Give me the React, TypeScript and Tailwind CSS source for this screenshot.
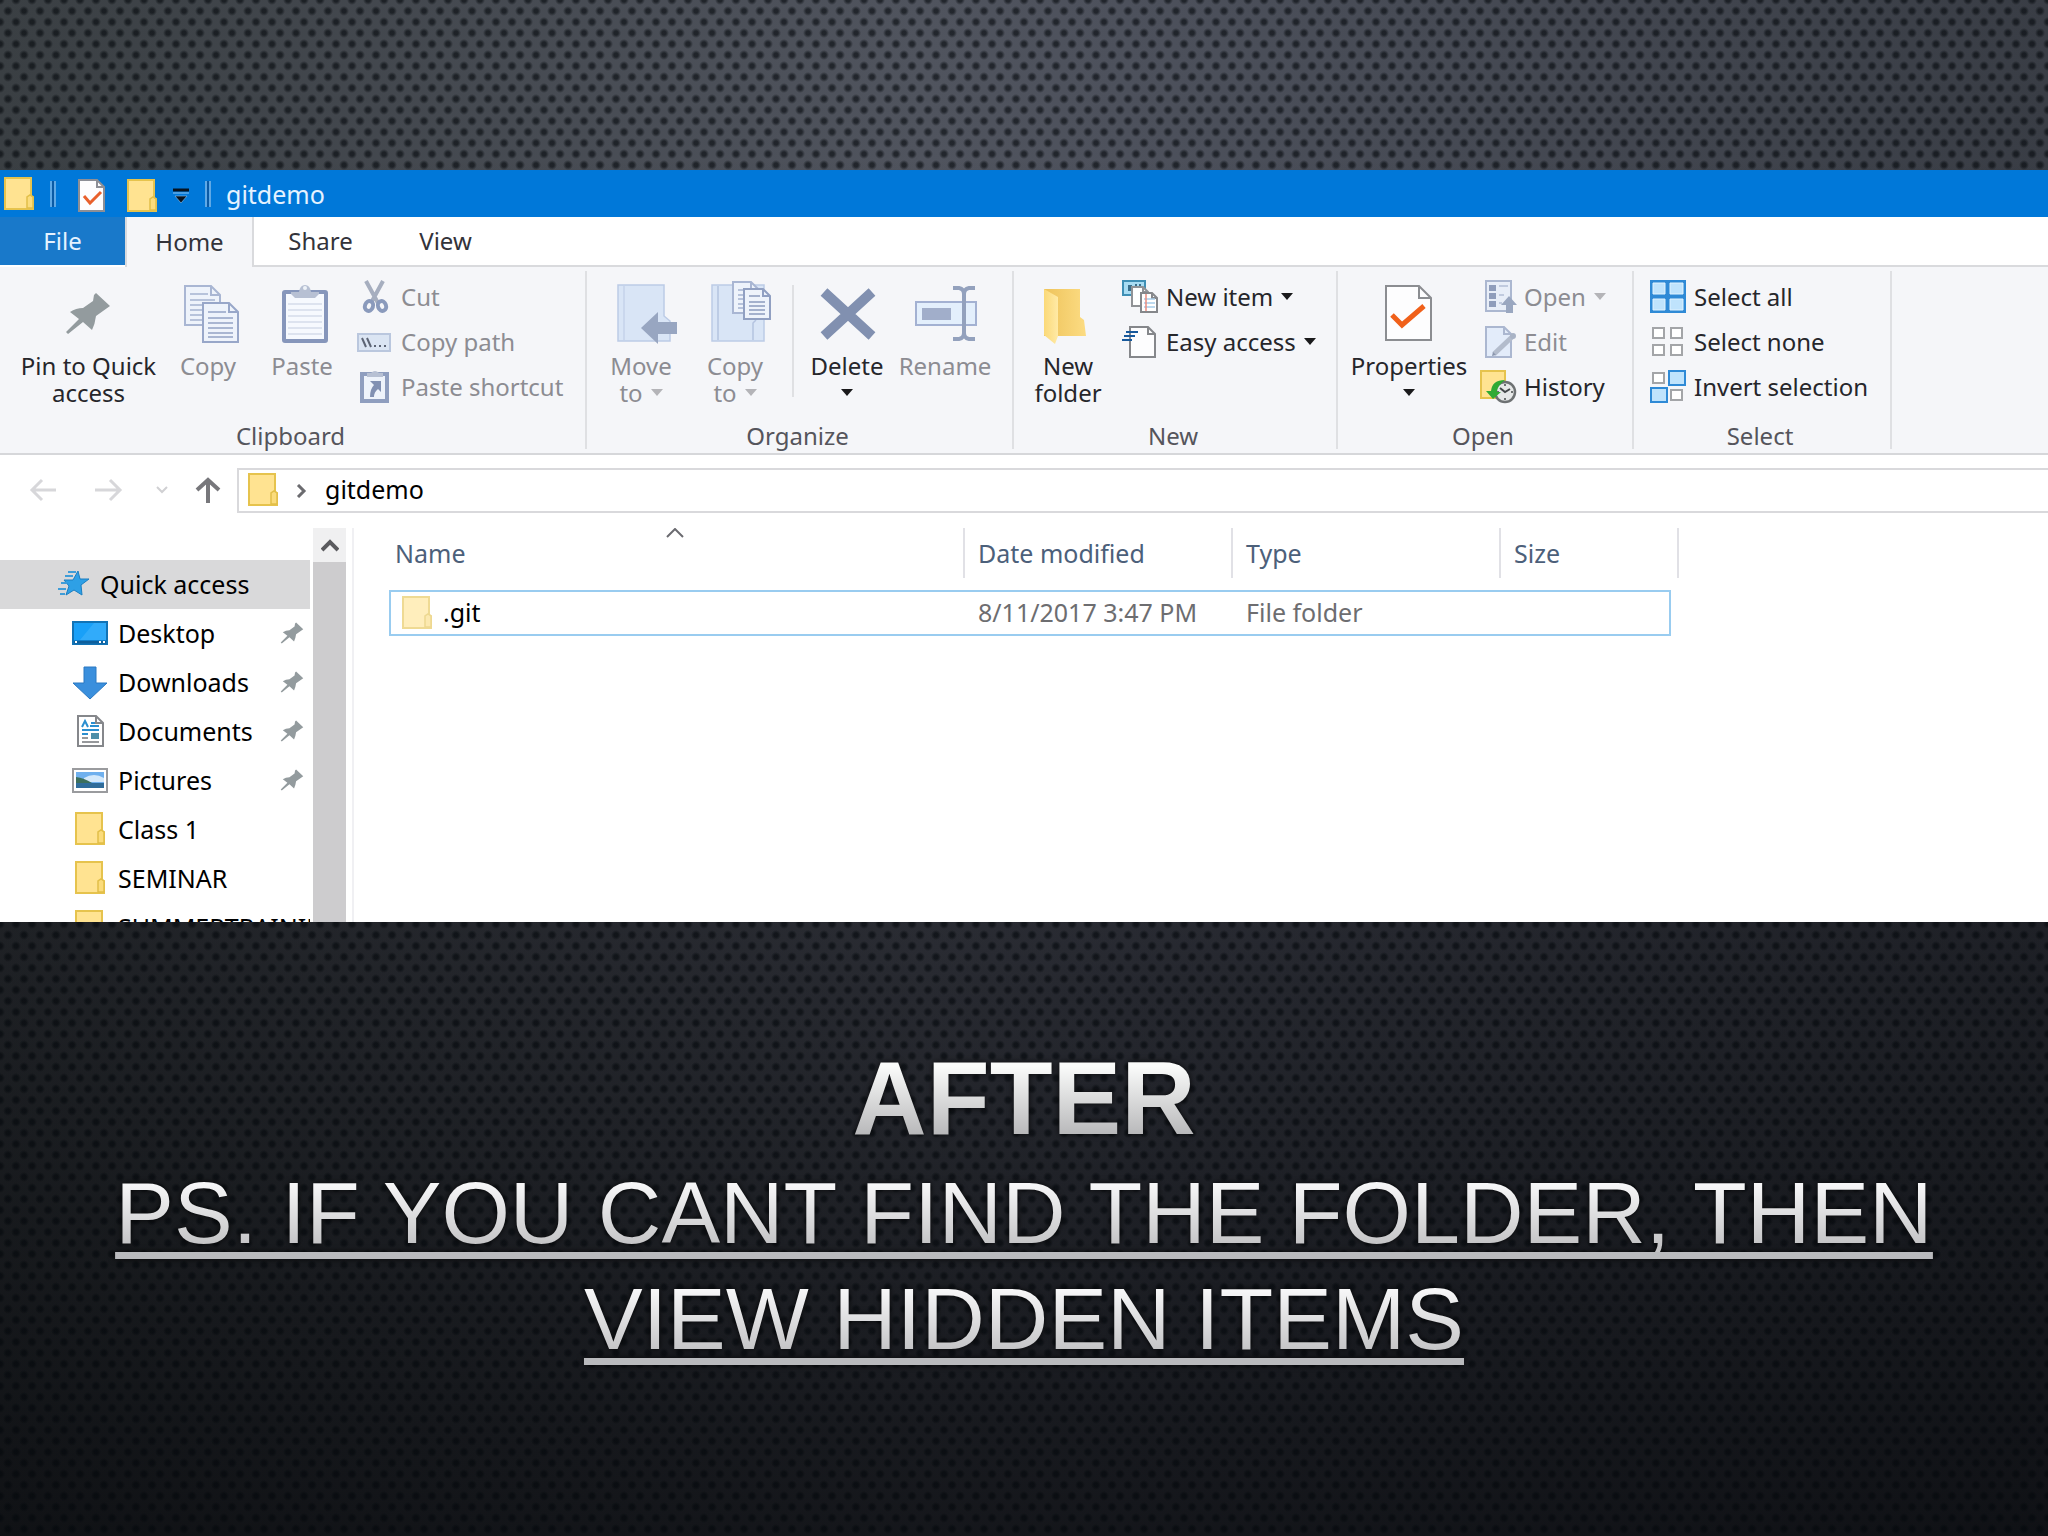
import type { ReactNode } from 'react'
import clsx from 'clsx'

/* ---------- icons ---------- */

function FolderIcon({ faded = false }: { faded?: boolean }) {
  return (
    <svg width="30" height="33" viewBox="0 0 30 33" className={clsx('shrink-0', faded && 'opacity-60')}>
      <path d="M1 1h26v18l2 1v12H1z" fill="#ffe391" stroke="#e6c34d" strokeWidth="2" />
      <path d="M23 31V20l3-2 3 2v11z" fill="#fbdc7c" stroke="#e2bf48" strokeWidth="1.5" />
    </svg>
  )
}

function PinShape() {
  return (
    <path
      d="M39 9 53 22l-7 5-7 5q-1 8-4 14l-9-8-15 12-2-2 13-13-9-7q6-4 13-4l10-7 1-6z"
      fill="#939b9e"
    />
  )
}

function SmallPin() {
  return (
    <svg width="24" height="22" viewBox="8 8 46 43" className="shrink-0">
      <PinShape />
    </svg>
  )
}

interface PageProps {
  x: number
  y: number
  w: number
  h: number
  fold?: number
  fill?: string
  stroke?: string
  rows?: number[]
}

function Page({ x, y, w, h, fold = 9, fill = '#eef3fb', stroke = '#a9b6d3', rows = [] }: PageProps) {
  return (
    <g fill="none" stroke={stroke} strokeWidth="2">
      <path d={`M${x} ${y}h${w - fold}l${fold} ${fold}v${h - fold}h${-w}z`} fill={fill} />
      <path d={`M${x + w - fold} ${y}v${fold}h${fold}`} />
      {rows.map((r) => (
        <path key={r} d={`M${x + 5} ${y + r}h${r < fold + 2 ? w - fold - 8 : w - 10}`} strokeWidth="1.6" />
      ))}
    </g>
  )
}

function BigIcon({ children }: { children: ReactNode }) {
  return (
    <svg width="64" height="60" viewBox="0 0 64 60" className="overflow-visible">
      {children}
    </svg>
  )
}

function SmallIcon({ children }: { children: ReactNode }) {
  return (
    <svg width="36" height="32" viewBox="0 0 36 32" className="shrink-0 overflow-visible">
      {children}
    </svg>
  )
}

const pinIcon = <BigIcon><PinShape /></BigIcon>

const copyIcon = (
  <BigIcon>
    <Page x={9} y={2} w={35} h={39} rows={[8, 14, 19, 24, 29, 34]} />
    <Page x={27} y={19} w={35} h={39} stroke="#98a7c9" rows={[9, 15, 20, 25, 30, 34]} />
  </BigIcon>
)

const pasteIcon = (
  <BigIcon>
    <rect x="14" y="8" width="42" height="49" rx="1" fill="#f6f9fe" stroke="#8696bb" strokeWidth="4" />
    <path d="M18 20h34M18 26h34M18 32h34M18 38h34M18 44h34M18 50h34" stroke="#d5dcea" strokeWidth="1.5" />
    <path d="M21 8h8q1-7 6-7t6 7h8v2l-4 4H25l-4-4z" fill="#b7c0d3" />
    <circle cx="35" cy="4" r="2" fill="#eef2f8" />
  </BigIcon>
)

const moveIcon = (
  <BigIcon>
    <path d="M9 1h46v31l6 5v20H9z" fill="#d9e5f6" stroke="#bccbe6" strokeWidth="1.5" />
    <path d="M15 2v54" stroke="#c4d2ea" strokeWidth="1.5" />
    <path d="M32 44 49 28v10h19v12H49v10z" fill="#98a6c1" />
  </BigIcon>
)

const copyToIcon = (
  <BigIcon>
    <path d="M9 1h52v56H9z" fill="#d9e5f6" stroke="#bccbe6" strokeWidth="1.5" />
    <path d="M15 2v54M50 56V39l3-3" fill="none" stroke="#b4c3e0" strokeWidth="1.5" />
    <Page x={30} y={-2} w={25} h={31} fold={7} rows={[8, 13, 17, 22, 26]} />
    <Page x={41} y={5} w={26} h={30} fold={7} stroke="#91a0c2" rows={[7, 13, 17, 21, 25]} />
  </BigIcon>
)

const deleteIcon = (
  <BigIcon>
    <path d="m9 8 48 44M57 8 9 52" stroke="#8190b0" strokeWidth="10" />
  </BigIcon>
)

const renameIcon = (
  <BigIcon>
    <path d="M3 18h60v23H3z" fill="#e3effc" stroke="#a3b1d2" strokeWidth="2" />
    <path d="M9 24h29v12H9z" fill="#a1aeca" />
    <path d="M40 4h6q5 1 5 6v39q0 5-5 6h-6M62 4h-6q-5 1-5 6v39q0 5 5 6h6" fill="none" stroke="#93a1bd" strokeWidth="4" />
  </BigIcon>
)

const newFolderIcon = (
  <BigIcon>
    <defs>
      <linearGradient id="folderBack">
        <stop offset="0" stopColor="#eec35b" />
        <stop offset="1" stopColor="#fcdc83" />
      </linearGradient>
      <linearGradient id="folderFlap">
        <stop offset="0" stopColor="#fbd978" />
        <stop offset="1" stopColor="#ffeaa6" />
      </linearGradient>
    </defs>
    <path d="M8 5h36v28l4 3 2 16H8z" fill="url(#folderBack)" />
    <path d="m8 5 14 8v39l-3 8L8 51z" fill="url(#folderFlap)" />
  </BigIcon>
)

const propertiesIcon = (
  <BigIcon>
    <Page x={9} y={2} w={45} h={54} fold={12} fill="#fdfdfe" stroke="#8b8d91" />
    <path d="m15 31 10 10 22-19" fill="none" stroke="#f0601a" strokeWidth="5" />
  </BigIcon>
)

const cutIcon = (
  <SmallIcon>
    <path d="m9 0 12 22M26 0 14 22" stroke="#a6aebf" strokeWidth="4" />
    <g fill="none" stroke="#8a9abc" strokeWidth="4">
      <ellipse cx="12" cy="25" rx="4" ry="5" transform="rotate(20 12 25)" />
      <ellipse cx="25" cy="25" rx="4" ry="5" transform="rotate(-20 25 25)" />
    </g>
  </SmallIcon>
)

const copyPathIcon = (
  <SmallIcon>
    <path d="M1 8h32v17H1z" fill="#dbe5f3" stroke="#bac7de" strokeWidth="2" />
    <path d="m5 12 4 9M10 12l4 9" stroke="#5d6575" strokeWidth="2" />
    <path d="M17 19h2v2h-2zM22 19h2v2h-2zM27 19h2v2h-2z" fill="#5d6575" />
  </SmallIcon>
)

const pasteShortcutIcon = (
  <SmallIcon>
    <path d="M5 3h25v27H5z" fill="#eef3fb" stroke="#8f9ebf" strokeWidth="4" />
    <path d="M10 2h4q4-4 8 0h4v4H10z" fill="#b7c0d3" />
    <path d="M13 10h11v11l-3-3q-4 3-4 8h-4q0-8 4-12z" fill="#8190b2" />
  </SmallIcon>
)

const newItemIcon = (
  <SmallIcon>
    <path d="M1 0h22v14H1z" fill="#a8dcf3" stroke="#3f8fb5" strokeWidth="2" />
    <path d="M6 4h4v6H6zM13 3h2v3h-2zM17 3h2v3h-2z" fill="#3a6f8c" />
    <Page x={10} y={6} w={16} h={19} fold={5} fill="#fff" stroke="#909296" />
    <Page x={19} y={12} w={16} h={19} fold={5} fill="#fff" stroke="#85878b" />
    <path d="M22 18h11M22 22h11M22 26h11" stroke="#a6cdea" strokeWidth="1.5" />
    <path d="M24 13v17" stroke="#e88b7f" strokeWidth="1.5" />
  </SmallIcon>
)

const easyAccessIcon = (
  <SmallIcon>
    <Page x={8} y={1} w={25} h={30} fold={7} fill="#fdfdfe" stroke="#85878b" />
    <path d="M4 6h12M2 10h11M0 14h10" stroke="#17599c" strokeWidth="2" />
  </SmallIcon>
)

const openIcon = (
  <SmallIcon>
    <path d="M6 0h25v30H6z" fill="#e8eef8" stroke="#abb7d0" strokeWidth="2" />
    <path d="M9 4h7v6H9zM9 12h7v6H9zM9 20h7v6H9z" fill="#8f9dbb" />
    <path d="M19 5h9M19 14h5M19 22h3" stroke="#c0cade" strokeWidth="2" />
    <path d="m29 15 8 9h-4v8h-7v-8h-5z" fill="#9aa7c0" />
  </SmallIcon>
)

const editIcon = (
  <SmallIcon>
    <Page x={6} y={1} w={25} h={30} fold={7} fill="#e3ecfa" stroke="#abb7d0" />
    <path d="m14 28 18-17" stroke="#b3bccc" strokeWidth="5" />
    <path d="m12 30 4-1-3-3z" fill="#8b96ad" />
    <circle cx="33" cy="10" r="3" fill="#a9b3c5" />
  </SmallIcon>
)

const historyIcon = (
  <SmallIcon>
    <path d="M1 0h24v27H1z" fill="#ffe391" stroke="#e6c34d" strokeWidth="2" />
    <circle cx="25" cy="21" r="10" fill="#e6e8e8" stroke="#6d7173" strokeWidth="2.5" />
    <path d="m20 17 5 4 5-3" fill="none" stroke="#44484a" strokeWidth="2" />
    <path d="M25 13v2M25 27v2M17 21h2M31 21h2" stroke="#44484a" strokeWidth="1.5" />
    <path d="M25 9q-13 0-14 11H6l7 8 8-7h-4q0-6 8-12z" fill="#2faa34" />
  </SmallIcon>
)

const selectAllIcon = (
  <SmallIcon>
    <path d="M0-1h36v33H0z" fill="#2f8ad6" />
    <path d="M3 2h12v11H3zM20 2h13v11H20zM3 18h12v11H3zM20 18h13v11H20z" fill="#bfe3fc" stroke="#e0f3ff" />
  </SmallIcon>
)

const selectNoneIcon = (
  <SmallIcon>
    <path d="M3 2h11v10H3zM21 2h11v10H21zM3 19h11v10H3zM21 19h11v10H21z" fill="#fff" stroke="#a3a5a8" strokeWidth="2" />
  </SmallIcon>
)

const invertIcon = (
  <SmallIcon>
    <path d="M3 2h11v10H3zM21 19h11v10H21z" fill="#fff" stroke="#a3a5a8" strokeWidth="2" />
    <path d="M19 0h16v14H19zM1 17h16v14H1z" fill="#bfe3fc" stroke="#2f8ad6" strokeWidth="2" />
  </SmallIcon>
)

const quickAccessIcon = (
  <svg width="32" height="27" viewBox="0 0 32 27">
    <path d="m20 1 2 8h9l-8 6 1 10-8-5-8 5 3-9-5-6h9z" fill="#2ea0e6" stroke="#1b7fc2" />
    <path d="M10 2h8M7 6h8M3 13h6M0 19h8M2 24h5" stroke="#3f9dd8" strokeWidth="2" />
  </svg>
)

const desktopIcon = (
  <SmallIcon>
    <path d="M1 5h34v22H1z" fill="#19a0f8" stroke="#1173b6" strokeWidth="2" />
    <path d="M22 6h12v17H8z" fill="#41b3fb" opacity=".6" />
    <path d="M2 25h32" stroke="#0e5f9c" strokeWidth="3" />
    <path d="M3 25h2M27 25h2M31 25h2" stroke="#fff" strokeWidth="2" />
  </SmallIcon>
)

const downloadsIcon = (
  <SmallIcon>
    <path d="M12 1h12v16h11L18 33 1 17h11z" fill="#3a8fdd" stroke="#2a78c2" />
  </SmallIcon>
)

const documentsIcon = (
  <SmallIcon>
    <Page x={6} y={1} w={25} h={30} fold={7} fill="#fff" stroke="#85878b" />
    <path d="m10 12 3-6 3 6M19 8h4M18 11h9M10 15h17M10 19h6" fill="none" stroke="#2b8fd0" strokeWidth="2" />
    <path d="M19 18h8v6h-8z" fill="#4d8ea8" />
    <path d="M10 23h6M10 27h17" stroke="#96989b" strokeWidth="2" />
  </SmallIcon>
)

const picturesIcon = (
  <SmallIcon>
    <path d="M1 5h34v23H1z" fill="#fff" stroke="#9a9b9e" strokeWidth="2" />
    <path d="M4 8h28v16H4z" fill="#6fb0ee" />
    <path d="M12 14q10-6 20 0v4H12z" fill="#d4e9fb" />
    <path d="M4 13q8 1 16 6H4z" fill="#3c6f5c" />
    <path d="M4 19h28v5H4z" fill="#2f6c9a" />
  </SmallIcon>
)

const documentCheckIcon = (
  <svg width="28" height="34" viewBox="0 0 28 34">
    <Page x={1} y={1} w={25} h={31} fold={7} fill="#fdfdfe" stroke="#8d8f96" />
    <path d="m6 17 6 7L23 13" fill="none" stroke="#e8602c" strokeWidth="3" />
  </svg>
)

function Arrow({ dim = false }: { dim?: boolean }) {
  return (
    <svg width="12" height="7" viewBox="0 0 12 7" className="inline-block shrink-0">
      <path d="M0 0h12L6 7z" fill={dim ? '#b4b4b8' : '#1a1a1c'} />
    </svg>
  )
}

/* ---------- ribbon ---------- */

interface RibbonButtonProps {
  icon: ReactNode
  label: string
  second?: string
  arrow?: boolean
  disabled?: boolean
  className?: string
}

function BigButton({ icon, label, second, arrow, disabled, className = 'w-[94px]' }: RibbonButtonProps) {
  return (
    <button
      disabled={disabled}
      className={clsx(
        'flex shrink-0 flex-col items-center whitespace-nowrap pt-[10px] leading-[27px]',
        disabled ? 'text-[#8c8c92]' : 'text-[#26262b]',
        className,
      )}
    >
      {icon}
      <span className="mt-2">{label}</span>
      <span className="flex h-[27px] items-center gap-2">
        {second}
        {arrow && <Arrow dim={disabled} />}
      </span>
    </button>
  )
}

function SmallButton({ icon, label, arrow, disabled }: RibbonButtonProps) {
  return (
    <button
      disabled={disabled}
      className={clsx(
        'flex h-[45px] items-center gap-2 whitespace-nowrap',
        disabled ? 'text-[#8c8c92]' : 'text-[#26262b]',
      )}
    >
      {icon}
      <span>{label}</span>
      {arrow && <Arrow dim={disabled} />}
    </button>
  )
}

function Group({ label, className, children }: { label: string; className: string; children: ReactNode }) {
  return (
    <section className={clsx('flex shrink-0 flex-col pt-[7px]', className)}>
      <div className="flex h-[147px] items-start">{children}</div>
      <h2 className="pr-1 text-center leading-[30px] text-[#55555c]">{label}</h2>
    </section>
  )
}

function Divider() {
  return <div className="my-1 w-[2px] shrink-0 bg-[#dfe0e3]" />
}

function Ribbon() {
  return (
    <div className="flex h-[188px] border-b-2 border-[#d6d7da] bg-[#f5f6f9]">
      <Group label="Clipboard" className="w-[585px]">
        <div className="flex pl-4">
          <BigButton icon={pinIcon} label="Pin to Quick" second="access" className="w-[145px]" />
          <BigButton icon={copyIcon} label="Copy" disabled />
          <BigButton icon={pasteIcon} label="Paste" disabled />
          <div className="pl-2">
            <SmallButton icon={cutIcon} label="Cut" disabled />
            <SmallButton icon={copyPathIcon} label="Copy path" disabled />
            <SmallButton icon={pasteShortcutIcon} label="Paste shortcut" disabled />
          </div>
        </div>
      </Group>
      <Divider />
      <Group label="Organize" className="w-[425px]">
        <div className="flex pl-[7px]">
          <BigButton icon={moveIcon} label="Move" second="to" arrow disabled />
          <BigButton icon={copyToIcon} label="Copy" second="to" arrow disabled />
          <div className="mt-[11px] ml-[10px] mr-[6px] h-[112px] w-[2px] bg-[#dfe0e3]" />
          <BigButton icon={deleteIcon} label="Delete" arrow />
          <BigButton icon={renameIcon} label="Rename" disabled className="w-[102px]" />
        </div>
      </Group>
      <Divider />
      <Group label="New" className="w-[322px]">
        <div className="flex pl-[7px]">
          <BigButton icon={newFolderIcon} label="New" second="folder" />
          <div className="pl-[7px]">
            <SmallButton icon={newItemIcon} label="New item" arrow />
            <SmallButton icon={easyAccessIcon} label="Easy access" arrow />
          </div>
        </div>
      </Group>
      <Divider />
      <Group label="Open" className="w-[294px]">
        <div className="flex pl-1">
          <BigButton icon={propertiesIcon} label="Properties" arrow className="w-[134px]" />
          <div className="pl-1">
            <SmallButton icon={openIcon} label="Open" arrow disabled />
            <SmallButton icon={editIcon} label="Edit" disabled />
            <SmallButton icon={historyIcon} label="History" />
          </div>
        </div>
      </Group>
      <Divider />
      <Group label="Select" className="w-[256px]">
        <div className="pl-4">
          <SmallButton icon={selectAllIcon} label="Select all" />
          <SmallButton icon={selectNoneIcon} label="Select none" />
          <SmallButton icon={invertIcon} label="Invert selection" />
        </div>
      </Group>
      <Divider />
    </div>
  )
}

/* ---------- window chrome ---------- */

function TitleSeparator() {
  return <div className="h-[26px] w-[6px] border-x-2 border-[#5fa9e6] bg-[#0a5aa5]" />
}

function TitleBar() {
  return (
    <header className="flex h-[47px] items-center bg-[#0078d9] pl-1 text-[25px] text-[#e4f2ff]">
      <FolderIcon />
      <div className="ml-4"><TitleSeparator /></div>
      <button aria-label="Properties" className="ml-[22px] mt-1">{documentCheckIcon}</button>
      <button aria-label="New folder" className="ml-[21px] mt-1"><FolderIcon /></button>
      <button aria-label="Customize Quick Access Toolbar" className="ml-4 mr-4 mt-1">
        <svg width="16" height="16" viewBox="0 0 16 16">
          <path d="M0 2h16" stroke="#06121f" strokeWidth="3" />
          <path d="M0 5h16" stroke="#8fc4f0" strokeWidth="1" />
          <path d="M2 8h12l-6 7z" fill="#06121f" stroke="#8fc4f0" strokeWidth=".6" />
        </svg>
      </button>
      <TitleSeparator />
      <h1 className="ml-[15px]">gitdemo</h1>
    </header>
  )
}

function Tabs() {
  return (
    <nav className="flex h-[50px] bg-white text-[#33333a]">
      <button className="h-12 w-[125px] bg-[#1979ca] text-[#e4f2ff]">File</button>
      <button className="w-[129px] border-x-2 border-[#d9dadd] bg-[#f5f6f9]">Home</button>
      <div className="flex flex-1 border-b-2 border-[#d9dadd]">
        <button className="w-[133px]">Share</button>
        <button className="w-[117px]">View</button>
      </div>
    </nav>
  )
}

function AddressBar() {
  return (
    <div className="flex h-[73px] items-start pt-[13px] text-[25px]">
      <div className="flex h-[44px] w-[237px] shrink-0 items-center pl-[29px]">
        <button aria-label="Back" disabled>
          <svg width="28" height="24" viewBox="0 0 28 24" fill="none" stroke="#d7d7da" strokeWidth="3">
            <path d="M27 12H3M13 2 3 12l10 10" />
          </svg>
        </button>
        <button aria-label="Forward" disabled className="ml-[38px]">
          <svg width="28" height="24" viewBox="0 0 28 24" fill="none" stroke="#d7d7da" strokeWidth="3">
            <path d="M0 12h25M15 2l10 10-10 10" />
          </svg>
        </button>
        <button aria-label="Recent locations" disabled className="ml-[33px]">
          <svg width="12" height="8" viewBox="0 0 12 8" fill="none" stroke="#d0d0d3" strokeWidth="2">
            <path d="m1 1 5 5 5-5" />
          </svg>
        </button>
        <button aria-label="Up" className="ml-[26px]">
          <svg width="28" height="26" viewBox="0 0 28 26" fill="none" stroke="#77777b" strokeWidth="4">
            <path d="M14 26V3M3 13 14 3l11 10" />
          </svg>
        </button>
      </div>
      <div className="flex h-[45px] flex-1 items-center border-2 border-r-0 border-[#d9d9dc] pb-[3px] pl-[9px] text-black">
        <FolderIcon />
        <svg width="11" height="14" viewBox="0 0 11 14" fill="none" stroke="#6b6b6f" strokeWidth="3" className="mx-[18px] mt-1">
          <path d="m2 1 6 6-6 6" />
        </svg>
        <button>gitdemo</button>
      </div>
    </div>
  )
}

/* ---------- body ---------- */

const places: { name: string; icon: ReactNode; pinned?: boolean }[] = [
  { name: 'Desktop', icon: desktopIcon, pinned: true },
  { name: 'Downloads', icon: downloadsIcon, pinned: true },
  { name: 'Documents', icon: documentsIcon, pinned: true },
  { name: 'Pictures', icon: picturesIcon, pinned: true },
  { name: 'Class 1', icon: <FolderIcon /> },
  { name: 'SEMINAR', icon: <FolderIcon /> },
  { name: 'SUMMERTRAINING', icon: <FolderIcon /> },
]

function Sidebar() {
  return (
    <aside className="flex w-[354px] shrink-0 border-r-2 border-[#f0f0f3] text-black">
      <ul className="mr-[3px] w-[310px] overflow-hidden pt-8">
        <li className="flex h-[49px] items-center gap-[10px] bg-[#d9d9da] pb-[2px] pl-[58px]">
          {quickAccessIcon}
          <span>Quick access</span>
        </li>
        {places.map((place) => (
          <li key={place.name} className="flex h-[49px] items-center pb-[2px] pl-[72px] pr-[6px]">
            <span className="mr-[10px] flex w-9 shrink-0 justify-center">{place.icon}</span>
            <span className="flex-1">{place.name}</span>
            {place.pinned && <SmallPin />}
          </li>
        ))}
      </ul>
      <div className="flex w-[33px] flex-col bg-[#f0f0f1]">
        <button aria-label="Scroll up" className="flex h-[34px] items-center justify-center">
          <svg width="18" height="13" viewBox="0 0 18 13" fill="none" stroke="#5a5a5e" strokeWidth="4">
            <path d="m1 11 8-8 8 8" />
          </svg>
        </button>
        <div className="flex-1 bg-[#cdccce]" />
      </div>
    </aside>
  )
}

const headCell = 'p-0 pb-3 text-left font-normal text-[#4c607a]'
const headInner = 'flex h-[50px] items-center border-r-2 border-[#e1e1e6]'
const bodyCell = 'h-[46px] border-y-2 border-[#99ccf0] p-0 pb-[2px]'

function FileTable() {
  return (
    <table className="ml-[35px] w-[1290px] table-fixed border-separate border-spacing-0 self-start whitespace-nowrap">
      <colgroup>
        <col className="w-[576px]" />
        <col className="w-[268px]" />
        <col className="w-[268px]" />
        <col className="w-[170px]" />
        <col className="w-[8px]" />
      </colgroup>
      <thead>
        <tr>
          <th className={headCell}>
            <div className={clsx(headInner, 'relative pl-[6px]')}>
              Name
              <svg
                width="18" height="10" viewBox="0 0 18 10" fill="none" stroke="#6b6b70" strokeWidth="2"
                className="absolute right-1/2 top-0 -mr-2"
              >
                <path d="m1 9 8-8 8 8" />
              </svg>
            </div>
          </th>
          <th className={headCell}><div className={clsx(headInner, 'pl-[13px]')}>Date modified</div></th>
          <th className={headCell}><div className={clsx(headInner, 'pl-[13px]')}>Type</div></th>
          <th className={headCell} colSpan={2}><div className={clsx(headInner, 'pl-[13px]')}>Size</div></th>
        </tr>
      </thead>
      <tbody className="text-[#6d6d70]">
        <tr>
          <td className={clsx(bodyCell, 'border-l-2')}>
            <div className="flex items-center gap-[11px] pl-[11px] text-black">
              <FolderIcon faded />
              .git
            </div>
          </td>
          <td className={clsx(bodyCell, 'pl-[13px]')}>8/11/2017 3:47 PM</td>
          <td className={clsx(bodyCell, 'pl-[13px]')}>File folder</td>
          <td className={clsx(bodyCell, 'border-r-2')} />
          <td />
        </tr>
      </tbody>
    </table>
  )
}

function ExplorerWindow() {
  return (
    <div className="flex h-[752px] flex-col overflow-hidden bg-white font-['Noto_Sans','Open_Sans',sans-serif] text-[24px] leading-[32px]">
      <TitleBar />
      <Tabs />
      <Ribbon />
      <AddressBar />
      <div className="flex min-h-0 flex-1 text-[25px]">
        <Sidebar />
        <FileTable />
      </div>
    </div>
  )
}

export default function App() {
  return (
    <div className="min-h-screen bg-[linear-gradient(90deg,#3a3f43,#50545e_45%,#4d515c_55%,#393d45)]">
      <div className="min-h-screen bg-[linear-gradient(180deg,transparent_10%,rgba(4,4,8,0.5)_60%,rgba(4,5,8,0.64)_78%,rgba(4,5,8,0.78))]">
        {/* perforated metal texture */}
        <div className="min-h-screen bg-[radial-gradient(circle,rgba(4,8,12,0.6)_2px,transparent_5px),radial-gradient(circle,rgba(4,8,12,0.6)_2px,transparent_5px)] bg-[length:16px_22px] bg-[position:0_0,8px_11px] pt-[170px]">
          <ExplorerWindow />
          <div className="px-16 pt-[124px] text-center font-['Liberation_Sans',Arial,sans-serif] drop-shadow-[0_0_3px_rgba(0,0,0,0.8)]">
            <h2 className="mb-2 text-[103px] font-bold leading-[106px]">
              <span className="bg-[linear-gradient(180deg,#fafbfa_22%,#b4b4b6_85%)] bg-clip-text text-transparent">AFTER</span>
            </h2>
            <p className="text-[88px] leading-[106px]">
              <span className="box-decoration-clone bg-[linear-gradient(180deg,#f6f6f7_22%,#c2c2c4_85%)] bg-clip-text text-transparent underline decoration-[#b9babd] decoration-[7px] underline-offset-[9px] [text-decoration-skip-ink:none]">
                PS. IF YOU CANT FIND THE FOLDER, THEN VIEW HIDDEN ITEMS
              </span>
            </p>
          </div>
        </div>
      </div>
    </div>
  )
}
